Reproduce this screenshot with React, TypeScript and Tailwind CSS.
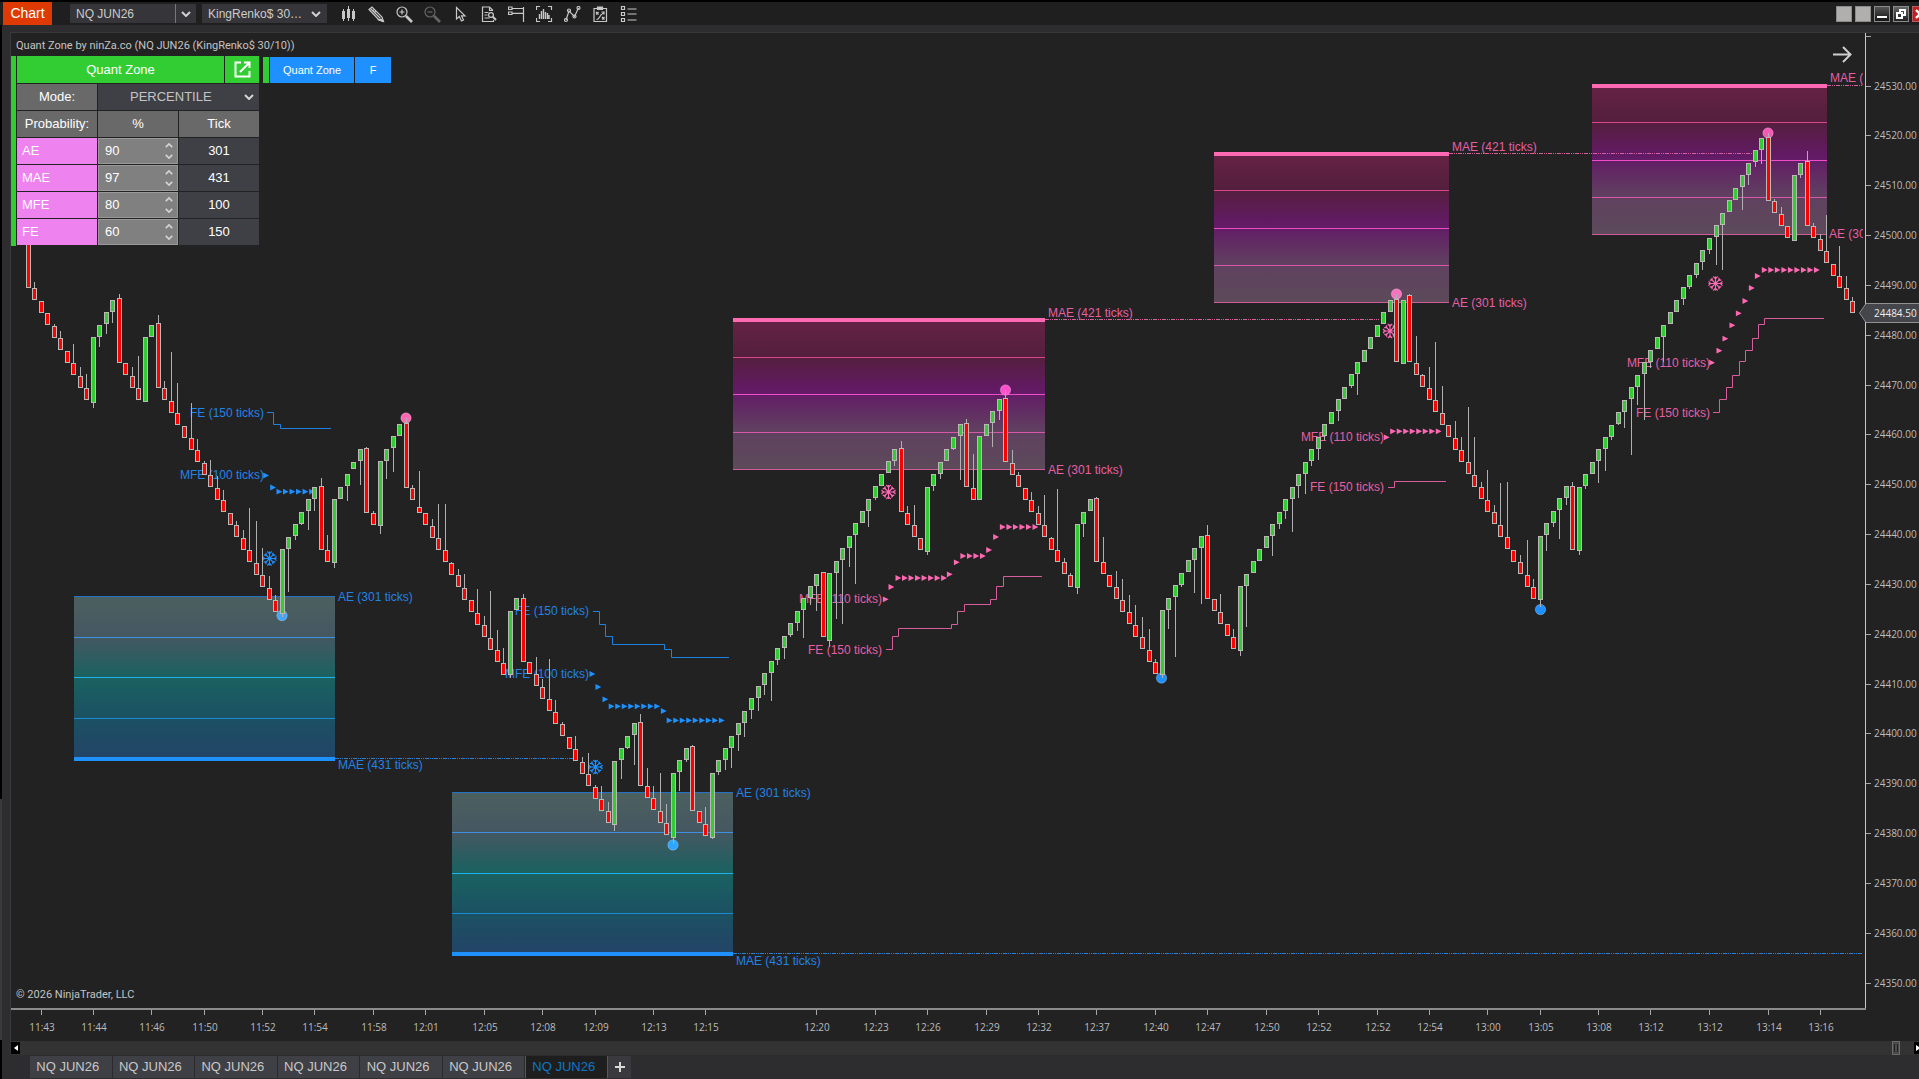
import React, { useState } from "react";

/* ------------------------------------------------------------------ */
/* Chart data                                                          */
/* ------------------------------------------------------------------ */

const FIRST_X = 28.1;
const PITCH = 6.517;
const BRICK = 12.46;

type Run = { dir: "up" | "down"; top: number; bottom: number; count: number };

// Each run starts with a reversal bar and continues with regular bricks.
const RUNS: Run[] = [
  { dir: "down", top: 222, bottom: 288, count: 10 },
  { dir: "up", top: 337.3, bottom: 402.7, count: 4 },
  { dir: "down", top: 298, bottom: 362.7, count: 4 },
  { dir: "up", top: 337.3, bottom: 401.7, count: 2 },
  { dir: "down", top: 323.3, bottom: 387.7, count: 19 },
  { dir: "up", top: 549, bottom: 613.7, count: 6 },
  { dir: "down", top: 485.7, bottom: 550, count: 2 },
  { dir: "up", top: 499, bottom: 562.7, count: 5 },
  { dir: "down", top: 448.3, bottom: 512.7, count: 2 },
  { dir: "up", top: 461.3, bottom: 525.7, count: 4 },
  { dir: "down", top: 423.3, bottom: 487.7, count: 16 },
  { dir: "up", top: 610.5, bottom: 674.9, count: 2 },
  { dir: "down", top: 597.5, bottom: 661.5, count: 14 },
  { dir: "up", top: 760.7, bottom: 824.7, count: 4 },
  { dir: "down", top: 721.5, bottom: 785.5, count: 5 },
  { dir: "up", top: 772.9, bottom: 837.6, count: 3 },
  { dir: "down", top: 746.3, bottom: 810.6, count: 3 },
  { dir: "up", top: 772.9, bottom: 837.6, count: 17 },
  { dir: "down", top: 572.3, bottom: 636.7, count: 1 },
  { dir: "up", top: 573.3, bottom: 640.7, count: 11 },
  { dir: "down", top: 448.3, bottom: 512.3, count: 4 },
  { dir: "up", top: 486.7, bottom: 551.7, count: 6 },
  { dir: "down", top: 423, bottom: 487.3, count: 2 },
  { dir: "up", top: 436, bottom: 500.3, count: 4 },
  { dir: "down", top: 398, bottom: 462.3, count: 11 },
  { dir: "up", top: 524, bottom: 588, count: 3 },
  { dir: "down", top: 498, bottom: 562, count: 10 },
  { dir: "up", top: 610.3, bottom: 674.7, count: 7 },
  { dir: "down", top: 535, bottom: 599, count: 5 },
  { dir: "up", top: 586.3, bottom: 650.7, count: 24 },
  { dir: "down", top: 298.7, bottom: 362.3, count: 1 },
  { dir: "up", top: 300.3, bottom: 364.3, count: 1 },
  { dir: "down", top: 295.3, bottom: 362.3, count: 20 },
  { dir: "up", top: 535.8, bottom: 600.2, count: 5 },
  { dir: "down", top: 485.7, bottom: 549.6, count: 1 },
  { dir: "up", top: 486.8, bottom: 550.7, count: 29 },
  { dir: "down", top: 137.3, bottom: 201, count: 4 },
  { dir: "up", top: 175.3, bottom: 241.3, count: 2 },
  { dir: "down", top: 161.3, bottom: 225.7, count: 8 },
];

// Bar index -> far end of its wick.
const WICKS: Record<number, number> = {
  1: 282, 4: 324, 5: 331, 7: 344, 8: 367, 9: 374, 10: 408, 11: 347, 12: 334, 13: 323,
  14: 294, 16: 367, 17: 356, 20: 315, 21: 381, 22: 352, 23: 383, 25: 403, 26: 439,
  27: 461, 28: 460, 29: 476, 30: 490, 32: 521, 33: 530, 34: 508, 35: 521, 36: 548,
  37: 576, 38: 595, 39: 617, 40: 592, 41: 540, 42: 525, 43: 530, 44: 511, 45: 478,
  46: 535, 47: 568, 49: 501, 51: 485, 52: 447, 53: 511, 54: 534, 55: 479, 56: 472,
  58: 418, 59: 485, 60: 471, 62: 519, 63: 504, 64: 504, 65: 562, 66: 569, 67: 574,
  69: 589, 70: 616, 71: 591, 72: 630, 73: 648, 74: 678, 76: 594, 78: 657, 79: 679,
  80: 659, 81: 700, 82: 722, 84: 736, 85: 757, 86: 753, 87: 785, 88: 786, 89: 802,
  90: 831, 91: 779, 92: 749, 93: 765, 94: 714, 95: 768, 96: 786, 97: 773, 98: 804,
  99: 844, 100: 791, 101: 762, 102: 745, 104: 807, 105: 838, 106: 775, 107: 770,
  108: 768, 109: 751, 110: 737, 111: 719, 112: 711, 113: 695, 114: 701, 115: 665,
  116: 659, 117: 637, 118: 631, 119: 638, 120: 605, 121: 611, 123: 647, 124: 619,
  125: 624, 126: 567, 127: 584, 129: 527, 130: 500, 133: 466, 134: 441, 135: 506,
  136: 505, 138: 555, 139: 491, 140: 479, 142: 449, 143: 480, 144: 419, 145: 454,
  148: 447, 149: 420, 150: 390, 151: 450, 152: 472, 154: 492, 155: 506, 156: 495,
  157: 537, 158: 489, 159: 558, 160: 573, 161: 594, 162: 537, 164: 497, 165: 537,
  167: 571, 168: 579, 169: 595, 170: 605, 171: 617, 172: 629, 173: 659, 174: 678,
  175: 629, 176: 657, 177: 587, 179: 593, 180: 604, 181: 525, 183: 594, 185: 629,
  186: 656, 187: 627, 191: 556, 192: 529, 193: 519, 194: 532, 195: 498, 196: 494,
  197: 466, 198: 460, 199: 440, 201: 421, 203: 388, 204: 395, 210: 294, 212: 294,
  213: 336, 214: 374, 215: 367, 216: 342, 217: 386, 219: 421, 220: 437, 221: 407,
  222: 437, 223: 482, 224: 470, 225: 505, 226: 483, 227: 482, 229: 555, 230: 540,
  231: 579, 232: 607, 233: 551, 234: 527, 235: 539, 236: 505, 237: 482, 238: 555,
  239: 489, 241: 483, 242: 471, 243: 440, 244: 425, 245: 428, 246: 455, 247: 405,
  248: 420, 249: 368, 251: 362, 254: 305, 255: 289, 256: 278, 257: 270, 258: 254,
  259: 265, 260: 270, 263: 210, 264: 185, 265: 167, 266: 164, 267: 133, 268: 199,
  269: 207, 272: 178, 273: 151, 274: 223, 275: 234, 276: 215, 278: 246, 279: 276,
  280: 297,
};

type Candle = { n: number; up: boolean; top: number; bottom: number; wick?: number };

const CANDLES: Candle[] = [];
for (const run of RUNS) {
  const up = run.dir === "up";
  for (let k = 0; k < run.count; k++) {
    const n = CANDLES.length;
    let top = run.top;
    let bottom = run.bottom;
    if (k > 0 && up) {
      top = run.top - BRICK * k;
      bottom = top + 12;
    } else if (k > 0) {
      bottom = run.bottom + BRICK * k;
      top = bottom - 12;
    }
    if (n === 60) top = bottom - 6;
    if (n === 50) bottom = top + 7;
    CANDLES.push({ n, up, top: Math.round(top), bottom: Math.round(bottom), wick: WICKS[n] });
  }
}

const barX = (n: number) => Math.floor(FIRST_X + PITCH * n);

type Zone = { kind: "buy" | "sell"; x1: number; x2: number; y1: number; y2: number; tail: number };

const ZONES: Zone[] = [
  { kind: "buy", x1: 74, x2: 335, y1: 596, y2: 758, tail: 573 },
  { kind: "buy", x1: 452, x2: 733, y1: 792, y2: 953, tail: 1863 },
  { kind: "sell", x1: 733, x2: 1045, y1: 319, y2: 469, tail: 1379 },
  { kind: "sell", x1: 1214, x2: 1449, y1: 153, y2: 302, tail: 1753 },
  { kind: "sell", x1: 1592, x2: 1827, y1: 85, y2: 234, tail: 1863 },
];

const ZONE_LINES = {
  buy: ["#2472c4", "#3f90e0", "#1fb2f0", "#1a8bd2"],
  sell: ["#d05c9c", "#d957a9", "#f04cc8", "#d8458c"],
};

const BLUE = "#1e90ff";
const PINK = "#ff69b4";
const BLUE_TEXT = "#2383e6";
const PINK_TEXT = "#e65fa5";

const LABELS: { t: string; x: number; y: number; sell?: boolean; end?: boolean }[] = [
  { t: "AE (301 ticks)", x: 338, y: 601 },
  { t: "MAE (431 ticks)", x: 338, y: 769 },
  { t: "AE (301 ticks)", x: 736, y: 797 },
  { t: "MAE (431 ticks)", x: 736, y: 965 },
  { t: "MAE (421 ticks)", x: 1048, y: 317, sell: true },
  { t: "AE (301 ticks)", x: 1048, y: 474, sell: true },
  { t: "MAE (421 ticks)", x: 1452, y: 151, sell: true },
  { t: "AE (301 ticks)", x: 1452, y: 307, sell: true },
  { t: "MAE (", x: 1830, y: 82, sell: true },
  { t: "AE (30", x: 1829, y: 238, sell: true },
  { t: "FE (150 ticks)", x: 264, y: 417, end: true },
  { t: "MFE (100 ticks)", x: 264, y: 479, end: true },
  { t: "FE (150 ticks)", x: 589, y: 615, end: true },
  { t: "MFE (100 ticks)", x: 589, y: 678, end: true },
  { t: "MFE (110 ticks)", x: 882, y: 603, sell: true, end: true },
  { t: "FE (150 ticks)", x: 882, y: 654, sell: true, end: true },
  { t: "MFE (110 ticks)", x: 1384, y: 441, sell: true, end: true },
  { t: "FE (150 ticks)", x: 1384, y: 491, sell: true, end: true },
  { t: "MFE (110 ticks)", x: 1710, y: 367, sell: true, end: true },
  { t: "FE (150 ticks)", x: 1710, y: 417, sell: true, end: true },
];

const STEP_LINES: { d: string; sell?: boolean }[] = [
  { d: "M267 412.5H273.5V424.5H280.5V428.5H331" },
  { d: "M593 611.5H599.5V624.5H605.5V636.5H612.5V644.5H664.5V649.5H671.5V657.5H729" },
  { d: "M886 649.5H892.5V636.5H898.5V628.5H951.5V624.5H957.5V611.5H964.5V604.5H990.5V599.5H996.5V586.5H1003.5V576.5H1042", sell: true },
  { d: "M1388 487.5H1394.5V481.5H1446", sell: true },
  { d: "M1713 412.5H1719.5V399.5H1726.5V387.5H1732.5V375.5H1739.5V361.5H1745.5V350.5H1752.5V338.5H1758.5V324.5H1764.5V318.5H1824", sell: true },
];

// [x, y, how many in a row]
const BUY_ARROWS: [number, number, number][] = [
  [266, 475.5, 1], [273, 487.5, 1], [279.3, 491.7, 6],
  [592.3, 674, 1], [598.3, 687, 1], [605.3, 699.3, 1], [611.5, 706.3, 8], [663.7, 711, 1], [669.5, 720.4, 9],
];
const SELL_ARROWS: [number, number, number][] = [
  [885.7, 599.3, 1], [891.3, 587, 1], [898.3, 578, 8], [949.7, 574.3, 1], [956.7, 562.3, 1], [963.2, 556, 4],
  [989, 550, 1], [996, 537, 1], [1002.7, 527, 6],
  [1386.7, 437.3, 1], [1393, 431.3, 8],
  [1712, 362.7, 1], [1719.3, 350.7, 1], [1725.3, 338.7, 1], [1732.3, 325.3, 1], [1738.7, 313.3, 1],
  [1745.3, 301, 1], [1751.7, 288, 1], [1757.7, 276, 1], [1764.6, 270, 9],
];

const DOTS: { x: number; y: number; fill: string }[] = [
  { x: 282, y: 615.5, fill: "#46a5ff" },
  { x: 406, y: 418, fill: "#ff69b4" },
  { x: 673, y: 845, fill: "#2ea5ff" },
  { x: 1005.5, y: 390, fill: "#ff50cc" },
  { x: 1161.5, y: 678, fill: "#1e90ff" },
  { x: 1396.5, y: 294, fill: "#f773c0" },
  { x: 1540.5, y: 609.5, fill: "#1e90ff" },
  { x: 1768, y: 133, fill: "#f658b8" },
];

const FLAKES: { x: number; y: number; sell?: boolean }[] = [
  { x: 269.5, y: 558.5 },
  { x: 595.5, y: 767 },
  { x: 888.5, y: 492, sell: true },
  { x: 1390, y: 331, sell: true },
  { x: 1715.5, y: 283.5, sell: true },
];

const TIMES: [number, string][] = [
  [2, "11:43"], [10, "11:44"], [19, "11:46"], [27, "11:50"], [36, "11:52"], [44, "11:54"], [53, "11:58"],
  [61, "12:01"], [70, "12:05"], [79, "12:08"], [87, "12:09"], [96, "12:13"], [104, "12:15"],
  [121, "12:20"], [130, "12:23"], [138, "12:26"], [147, "12:29"], [155, "12:32"], [164, "12:37"],
  [173, "12:40"], [181, "12:47"], [190, "12:50"], [198, "12:52"], [207, "12:52"], [215, "12:54"],
  [224, "13:00"], [232, "13:05"], [241, "13:08"], [249, "13:12"], [258, "13:12"], [267, "13:14"], [275, "13:16"],
];

const PRICES = Array.from({ length: 19 }, (_, i) => 24530 - i * 10);
const priceY = (p: number) => Math.round(85.5 + ((24530 - p) * 897) / 180);

/* ------------------------------------------------------------------ */
/* Chart                                                               */
/* ------------------------------------------------------------------ */

const mainEdge = (z: Zone) => (z.kind === "buy" ? z.y2 : z.y1);

function ZoneShape({ z }: { z: Zone }) {
  const buy = z.kind === "buy";
  const h = z.y2 - z.y1;
  const tints = ZONE_LINES[z.kind];
  const thin = [0, 1, 2, 3].map((i) => (buy ? z.y1 + (h * i) / 4 : z.y2 - (h * i) / 4));
  return (
    <g shapeRendering="crispEdges">
      <rect x={z.x1} y={z.y1} width={z.x2 - z.x1} height={h} fill={buy ? "url(#buyZone)" : "url(#sellZone)"} />
      {thin.map((y, i) => (
        <rect key={i} x={z.x1} y={Math.round(y)} width={z.x2 - z.x1} height={1} fill={tints[i]} />
      ))}
      <rect x={z.x1} y={mainEdge(z) - 1} width={z.x2 - z.x1} height={4} fill={buy ? BLUE : PINK} />
    </g>
  );
}

function Arrows({ rows, color }: { rows: [number, number, number][]; color: string }) {
  return (
    <g fill={color}>
      {rows.flatMap(([x, y, count]) =>
        Array.from({ length: count }, (_, i) => {
          const cx = x + i * 6.52;
          return <path key={`${x}-${i}`} d={`M${cx - 2.8} ${y - 2.9}L${cx + 3} ${y}L${cx - 2.8} ${y + 2.9}Z`} />;
        })
      )}
    </g>
  );
}

function Chart() {
  return (
    <svg
      viewBox="11 33 1908 1008"
      className="block h-full w-full"
      role="img"
      aria-label="NQ JUN26 KingRenko$ 30/10 price chart"
    >
      <defs>
        <linearGradient id="buyZone" x1="0" y1="0" x2="0" y2="1">
          <stop offset="0" stopColor="#4c605f" />
          <stop offset="0.25" stopColor="#455761" />
          <stop offset="0.5" stopColor="#1a6260" />
          <stop offset="0.75" stopColor="#1b5162" />
          <stop offset="1" stopColor="#234467" />
        </linearGradient>
        <linearGradient id="sellZone" x1="0" y1="0" x2="0" y2="1">
          <stop offset="0" stopColor="#662245" />
          <stop offset="0.25" stopColor="#541f3d" />
          <stop offset="0.48" stopColor="#631a66" />
          <stop offset="0.75" stopColor="#604160" />
          <stop offset="1" stopColor="#5c4a5a" />
        </linearGradient>
        <clipPath id="plot">
          <rect x="11" y="33" width="1852" height="975" />
        </clipPath>
        <g id="flake" fill="none" strokeWidth="1.1">
          <path d="M0 -7V7M-7 0H7M-4.500 -4.500L4.500 4.500M4.500 -4.500L-4.500 4.500" />
          <path d="M-2.200 -7L0 -4.800L2.200 -7M-2.200 7L0 4.800L2.200 7M-7 -2.200L-4.800 0L-7 2.200M7 -2.200L4.800 0L7 2.200" />
          <path d="M-5.800 -3.400H-3.400V-5.800M5.800 -3.400H3.400V-5.800M-5.800 3.400H-3.400V5.800M5.800 3.400H3.400V5.800" />
        </g>
      </defs>

      <g clipPath="url(#plot)">
        {ZONES.map((z) => (
          <ZoneShape key={z.x1} z={z} />
        ))}
        {ZONES.map((z) => (
          <path
            key={z.x1}
            d={`M${z.x2} ${mainEdge(z) + 0.5}H${z.tail}`}
            stroke={z.kind === "buy" ? "#2b80d0" : "#d4609c"}
            strokeDasharray="4 1 1 1 1 1"
            shapeRendering="crispEdges"
          />
        ))}
        {STEP_LINES.map((s) => (
          <path key={s.d} d={s.d} fill="none" stroke={s.sell ? "#d85d9c" : "#1f82e0"} />
        ))}
        {LABELS.map((l) => (
          <text
            key={`${l.x}-${l.y}`}
            x={l.x}
            y={l.y}
            textAnchor={l.end ? "end" : "start"}
            fill={l.sell ? PINK_TEXT : BLUE_TEXT}
            className="font-['Liberation_Sans',Arial,sans-serif] text-[12px]"
          >
            {l.t}
          </text>
        ))}
        <Arrows rows={BUY_ARROWS} color={BLUE} />
        <Arrows rows={SELL_ARROWS} color={PINK} />
        {DOTS.map((d) => (
          <circle key={d.x} cx={d.x} cy={d.y} r="5.2" fill={d.fill} stroke="#ffffff" strokeOpacity="0.25" />
        ))}
        {FLAKES.map((f) => (
          <use key={f.x} href="#flake" x={f.x} y={f.y} stroke={f.sell ? PINK : BLUE} />
        ))}
        <g shapeRendering="crispEdges">
          {CANDLES.map((c) => {
            const x = barX(c.n);
            const start = c.up ? c.bottom : c.top;
            return (
              <g key={c.n}>
                {c.wick !== undefined && (
                  <rect
                    x={x}
                    y={Math.min(c.wick, start)}
                    width={1}
                    height={Math.max(1, Math.abs(start - c.wick))}
                    fill="#b0b0b0"
                  />
                )}
                <rect x={x - 2} y={c.top} width={5} height={c.bottom - c.top} fill="#bdb8b8" />
                <rect
                  x={x - 1}
                  y={c.top + 1}
                  width={3}
                  height={c.bottom - c.top - 2}
                  fill={c.up ? "#32cd32" : "#ff0000"}
                />
              </g>
            );
          })}
        </g>
      </g>

      <path d="M1833 54.5H1850M1843 47L1850.500 54.500L1843 62" fill="none" stroke="#cfcfcf" strokeWidth="2" />

      <g shapeRendering="crispEdges" fill="#a8a8a8">
        <rect x="1865" y="33" width="1" height="976" fill="#c8c8c8" />
        <rect x="11" y="1008" width="1855" height="2" fill="#8c8c8c" />
        <rect x="1866" y="36" width="5" height="1" />
        {PRICES.map((p) => (
          <rect key={p} x="1866" y={priceY(p)} width="5" height="1" />
        ))}
        {TIMES.map(([n]) => (
          <rect key={n} x={barX(n)} y="1010" width="1" height="5" />
        ))}
      </g>

      <g className="font-['Open_Sans','Noto_Sans',sans-serif] text-[10px]" fill="#bcbcbc">
        {PRICES.map((p) => (
          <text key={p} x="1874" y={priceY(p) + 4}>
            {p.toFixed(2)}
          </text>
        ))}
        {TIMES.map(([n, t]) => (
          <text key={n} x={barX(n) + 1} y="1031" textAnchor="middle">
            {t}
          </text>
        ))}
        <path d="M1859.500 313L1866 303.500H1920V322.500H1866Z" fill="#45454c" stroke="#8f8f94" />
        <text x="1874" y="317" fill="#eeeeee">
          24484.50
        </text>
      </g>
    </svg>
  );
}

/* ------------------------------------------------------------------ */
/* Toolbar                                                             */
/* ------------------------------------------------------------------ */

const TOOLS: { name: string; dim?: boolean; icon: React.ReactNode }[] = [
  {
    name: "Chart style",
    icon: (
      <g fill="currentColor" stroke="none">
        <path d="M2 5h3v8H2zM7 3h3v9H7zM12 5h3v8h-3z" />
        <path d="M3 3h1v12H3zM8 0h1v15H8zM13 3h1v12h-1z" />
      </g>
    ),
  },
  {
    name: "Drawing tools",
    icon: (
      <g>
        <path d="M1 3.500L4 1L14 11L15.500 15.500L11 14Z" />
        <path d="M2.500 2.500L12.500 12.500M4.500 5.500L6 3.500M6 7L8 5" />
        <path d="M13.500 13.500L15.500 15.500L11 14Z" fill="currentColor" />
      </g>
    ),
  },
  {
    name: "Zoom in",
    icon: (
      <g>
        <circle cx="6" cy="6" r="5" />
        <path d="M3.500 6h5M6 3.500v5" />
        <path d="M10 10L16 16" strokeWidth="2.6" />
      </g>
    ),
  },
  {
    name: "Zoom out",
    dim: true,
    icon: (
      <g>
        <circle cx="6" cy="6" r="5" />
        <path d="M3.500 6h5" />
        <path d="M10 10L16 16" strokeWidth="2.6" />
      </g>
    ),
  },
  { name: "Cursor", icon: <path d="M4.500 1.500V13L7.300 10.500L9.500 15L11.500 14L9.500 9.800H13Z" /> },
  {
    name: "Data box",
    icon: (
      <g>
        <path d="M13 4.500L9.500 1H2.500V15.500H13.500V14" />
        <path d="M9.500 1V4.500H13M4.500 6.500h4M4.500 9h3M4.500 12h5" />
        <circle cx="11" cy="9" r="2.400" />
        <path d="M12.800 10.800L16 14" strokeWidth="2" />
      </g>
    ),
  },
  {
    name: "Chart trader",
    icon: <path d="M.5 1h3.500v2.500H.5zM.5 6h3.500v2.500H.5zM4 2.500h11.500M4 7.300h11.500M15.500 1v15" />,
  },
  {
    name: "Indicators",
    icon: (
      <g>
        <path d="M.5 4V.5H4M12 .5h3.500V4M15.500 12v3.500H12M4 15.500H.5V12" />
        <path d="M3.500 13V8M5.500 13V5M7.500 13V3M9.500 13V6M11.500 13V7M13 13V9" strokeWidth="1.400" />
      </g>
    ),
  },
  {
    name: "Strategies",
    icon: (
      <g>
        <path d="M2 14L5 5L10.500 10.500L14.500 2" />
        <circle cx="2" cy="14" r="1.500" />
        <circle cx="5" cy="4.500" r="1.500" />
        <circle cx="10.500" cy="10.500" r="1.500" />
        <circle cx="14.500" cy="2" r="1.500" />
      </g>
    ),
  },
  {
    name: "Performance",
    icon: (
      <g>
        <path d="M2 2.500H14.500V15.500H2z" />
        <path d="M5.500 1h5v2.500h-5z" fill="currentColor" />
        <path d="M4 6l2.500 2.500M6.500 6L4 8.500M10 11l2.500 2.500M12.500 11L10 13.500M4.500 13.500C8 13.500 6.500 9.500 11.500 7M9.500 6h2.500v2.500" />
      </g>
    ),
  },
  {
    name: "Properties",
    icon: <path d="M1.500 .5h3v3h-3zM1.500 6.500h3v3h-3zM1.500 12.500h3v3h-3zM7.500 3h9M7.500 8h9M7.500 14h9" />,
  },
];

function Chevron({ className }: { className: string }) {
  return (
    <svg viewBox="0 0 10 6" className={className} aria-hidden="true">
      <path d="M1 1L5 5L9 1" fill="none" stroke="currentColor" strokeWidth="2" />
    </svg>
  );
}

function Toolbar() {
  return (
    <header className="flex h-[25px] items-start overflow-hidden border-t-2 border-black bg-[#1f1f1f] pl-[3px]">
      <h1 className="h-[23px] w-[49px] bg-[#df3a04] text-center text-[14px] leading-[23px] text-white">Chart</h1>
      <label className="relative mt-[2px] ml-[18px] flex h-[19px] w-[126px] bg-[#35353a]">
        <span className="sr-only">Instrument</span>
        <select className="h-full w-full appearance-none bg-transparent pl-[6px] text-[12px] leading-4 text-[#cccccc] outline-none">
          <option>NQ JUN26</option>
        </select>
        <span className="pointer-events-none absolute inset-y-0 right-0 flex w-[21px] items-center justify-center border-l border-[#77777c] text-[#d0d0d0]">
          <Chevron className="h-[6px] w-[10px]" />
        </span>
      </label>
      <label className="relative mt-[2px] ml-[6px] flex h-[19px] w-[125px] bg-[#35353a]">
        <span className="sr-only">Bar type</span>
        <select className="h-full w-full appearance-none bg-transparent pl-[6px] text-[12px] leading-4 text-[#cccccc] outline-none">
          <option>KingRenko$ 30…</option>
        </select>
        <span className="pointer-events-none absolute inset-y-0 right-[6px] flex items-center text-[#d0d0d0]">
          <Chevron className="h-[6px] w-[10px]" />
        </span>
      </label>
      <nav aria-label="Chart tools" className="ml-[7px] flex">
        {TOOLS.map((t) => (
          <button
            key={t.name}
            type="button"
            title={t.name}
            className={`flex h-[24px] w-[28px] items-center justify-center ${t.dim ? "text-[#666666]" : "text-[#c8c8c8]"}`}
          >
            <svg
              viewBox="0 0 17 17"
              className="h-[17px] w-[17px]"
              fill="none"
              stroke="currentColor"
              strokeWidth="1.2"
              aria-hidden="true"
            >
              {t.icon}
            </svg>
          </button>
        ))}
      </nav>
      <div className="mt-1 -mr-[9px] ml-auto flex shrink-0 gap-[3px]">
        <button type="button" aria-label="Link instrument" className="h-4 w-4 border border-[#8a8a8a] bg-[#b1aeae]" />
        <button type="button" aria-label="Link interval" className="h-4 w-4 border border-[#8a8a8a] bg-[#b1aeae]" />
        <button
          type="button"
          aria-label="Minimize"
          className="flex h-4 w-4 items-end justify-center border border-[#8a8a8a] bg-linear-to-b from-[#555555] to-[#151515] pb-[3px]"
        >
          <span className="h-[2px] w-[10px] bg-white" />
        </button>
        <button
          type="button"
          aria-label="Restore"
          className="flex h-4 w-4 items-center justify-center border border-[#8a8a8a] bg-linear-to-b from-[#666666] to-[#222222]"
        >
          <svg viewBox="0 0 10 10" className="h-[10px] w-[10px]" fill="none" stroke="#ffffff" strokeWidth="2">
            <path d="M4 3V1H9V6H7M1 4H6V9H1Z" />
          </svg>
        </button>
        <button
          type="button"
          aria-label="Close"
          className="flex h-4 w-4 items-center justify-center border border-[#b06060] bg-[#c21f24]"
        >
          <svg viewBox="0 0 10 10" className="h-[10px] w-[10px]" stroke="#ffffff" strokeWidth="2.4">
            <path d="M1 1L9 9M9 1L1 9" />
          </svg>
        </button>
      </div>
    </header>
  );
}

/* ------------------------------------------------------------------ */
/* Quant Zone panel                                                    */
/* ------------------------------------------------------------------ */

const PROBABILITIES = [
  { name: "AE", pct: 90, tick: 301 },
  { name: "MAE", pct: 97, tick: 431 },
  { name: "MFE", pct: 80, tick: 100 },
  { name: "FE", pct: 60, tick: 150 },
];

function ProbabilityRow({ name, pct, tick }: { name: string; pct: number; tick: number }) {
  const [value, setValue] = useState(pct);
  return (
    <tr>
      <th scope="row" className="h-[26px] bg-[#ee82ee] pl-[5px] text-left font-normal text-white">
        <label htmlFor={`pct-${name}`}>{name}</label>
      </th>
      <td className="bg-[#808080]">
        <div className="flex h-[26px] items-center justify-between border border-[#999999] pr-1 pl-[6px]">
          <input
            id={`pct-${name}`}
            type="number"
            value={value}
            onChange={(e) => setValue(Number(e.target.value))}
            className="w-10 appearance-none bg-transparent text-white outline-none [appearance:textfield] [&::-webkit-inner-spin-button]:appearance-none"
          />
          <span className="flex flex-col gap-[6px] text-[#d4d4d4]">
            <button type="button" aria-label={`Increase ${name}`} onClick={() => setValue(value + 1)}>
              <Chevron className="h-[5px] w-2 rotate-180" />
            </button>
            <button type="button" aria-label={`Decrease ${name}`} onClick={() => setValue(value - 1)}>
              <Chevron className="h-[5px] w-2" />
            </button>
          </span>
        </div>
      </td>
      <td className="bg-[#3f3f46] text-center text-white">{tick}</td>
    </tr>
  );
}

function QuantZonePanel() {
  return (
    <section aria-label="Quant Zone" className="flex gap-px text-[13px] leading-4">
      <div className="w-[5px] bg-[#32cd32]" />
      <div className="flex w-[242px] flex-col gap-px">
        <div className="flex h-[27px] gap-px">
          <button type="button" className="flex-1 bg-[#32cd32] text-white">
            Quant Zone
          </button>
          <button
            type="button"
            aria-label="Open in window"
            className="flex w-[34px] items-center justify-center bg-[#32cd32] text-white"
          >
            <svg viewBox="0 0 17 17" className="h-[17px] w-[17px]" fill="none" stroke="currentColor" strokeWidth="2">
              <path d="M7 1.500H1.500V15.500H15.500V10M10 1.500H15.500V7M15.500 1.500L6 11" />
            </svg>
          </button>
        </div>
        <div className="flex h-[26px] gap-px">
          <label htmlFor="mode" className="w-20 bg-[#696969] text-center leading-[26px] text-white">
            Mode:
          </label>
          <span className="relative flex flex-1 items-center bg-[#3f3f46]">
            <select
              id="mode"
              className="h-full w-full appearance-none bg-transparent pl-8 text-[13px] text-[#c4c4c4] outline-none"
            >
              <option>PERCENTILE</option>
            </select>
            <Chevron className="pointer-events-none absolute right-[5px] h-[6px] w-[10px] text-[#d4d4d4]" />
          </span>
        </div>
        <table className="-mx-px -mt-px w-[244px] table-fixed border-separate border-spacing-px">
          <thead>
            <tr className="text-white">
              <th scope="col" className="h-[26px] bg-[#696969] font-normal">
                Probability:
              </th>
              <th scope="col" className="bg-[#696969] font-normal">
                %
              </th>
              <th scope="col" className="bg-[#696969] font-normal">
                Tick
              </th>
            </tr>
          </thead>
          <tbody>
            {PROBABILITIES.map((p) => (
              <ProbabilityRow key={p.name} {...p} />
            ))}
          </tbody>
        </table>
      </div>
      <div className="mt-px ml-[3px] flex h-[26px] gap-px text-[11px] text-white">
        <div className="w-[6px] bg-[#32cd32]" />
        <button type="button" className="w-[84px] bg-[#1e90ff]">
          Quant Zone
        </button>
        <button type="button" className="w-[36px] bg-[#1e90ff]">
          F
        </button>
      </div>
    </section>
  );
}

/* ------------------------------------------------------------------ */
/* Bottom bars                                                         */
/* ------------------------------------------------------------------ */

function ScrollBar() {
  return (
    <div className="flex h-[14px] items-center bg-[#333333] pl-px">
      <button type="button" aria-label="Scroll left" className="flex h-3 w-[9px] items-center justify-center bg-black">
        <svg viewBox="0 0 4 6" className="h-[6px] w-1" fill="#ffffff">
          <path d="M4 0V6L0 3Z" />
        </svg>
      </button>
      <div className="flex-1" />
      <div className="mr-[14px] flex h-[14px] w-2 justify-center gap-[2px] border border-[#6a6a6a] bg-[#4a4a4a] py-[2px]">
        <span className="w-px bg-[#222222]" />
        <span className="w-px bg-[#222222]" />
      </div>
      <button type="button" aria-label="Scroll right" className="flex h-3 w-[5px] items-center justify-end bg-black">
        <svg viewBox="0 0 3 6" className="h-[6px] w-[3px]" fill="#ffffff">
          <path d="M0 0V6L3 4V2Z" />
        </svg>
      </button>
    </div>
  );
}

function TabBar() {
  const tabs = ["NQ JUN26", "NQ JUN26", "NQ JUN26", "NQ JUN26", "NQ JUN26", "NQ JUN26", "NQ JUN26"];
  return (
    <nav aria-label="Chart tabs" className="flex h-[24px] bg-[#2d2d30] pt-px pb-px pl-[20px] text-[13px]">
      <div className="grid w-[578px] grid-cols-7">
        {tabs.map((t, i) => (
          <button
            key={i}
            type="button"
            aria-current={i === 6 ? "page" : undefined}
            className={
              i === 6
                ? "border-x border-[#0a6db8] bg-[#1e1e1e] pr-[6px] text-[#0f76c4]"
                : "border-r border-[#2a2a2c] bg-[#3f3f46] pr-[6px] text-[#c8c8c8]"
            }
          >
            {t}
          </button>
        ))}
      </div>
      <button
        type="button"
        aria-label="Add tab"
        className="flex w-[23px] items-center justify-center bg-[#3a3a3e] text-[#d8d8d8]"
      >
        <svg viewBox="0 0 10 10" className="h-[10px] w-[10px]" stroke="currentColor" strokeWidth="2">
          <path d="M5 0V10M0 5H10" />
        </svg>
      </button>
    </nav>
  );
}

export default function App() {
  return (
    <div className="flex h-screen flex-col overflow-hidden bg-[#2d2d30] font-['Liberation_Sans',Arial,sans-serif]">
      <Toolbar />
      <div className="flex min-h-0 flex-1">
        <div className="flex w-[2px] flex-col bg-black">
          <div className="mt-auto mb-[39px] h-[241px] bg-[#3a3a3c]" />
        </div>
        <div className="flex min-w-0 flex-1 flex-col pt-[7px] pl-[8px]">
          <main className="relative min-h-0 flex-1 border-t border-l border-[#39393c] bg-[#222222]">
            <Chart />
            <div className="absolute top-0 left-0">
              <p className="h-[23px] pl-[5px] font-['Roboto','Noto_Sans',sans-serif] text-[11px] leading-[25px] text-[#c4c4c4]">
                Quant Zone by ninZa.co (NQ JUN26 (KingRenko$ 30/10))
              </p>
              <QuantZonePanel />
            </div>
            <p className="absolute bottom-[38px] left-[5px] font-['Roboto','Noto_Sans',sans-serif] text-[11px] leading-4 text-[#c4c4c4]">
              © 2026 NinjaTrader, LLC
            </p>
          </main>
          <ScrollBar />
          <TabBar />
        </div>
      </div>
    </div>
  );
}
